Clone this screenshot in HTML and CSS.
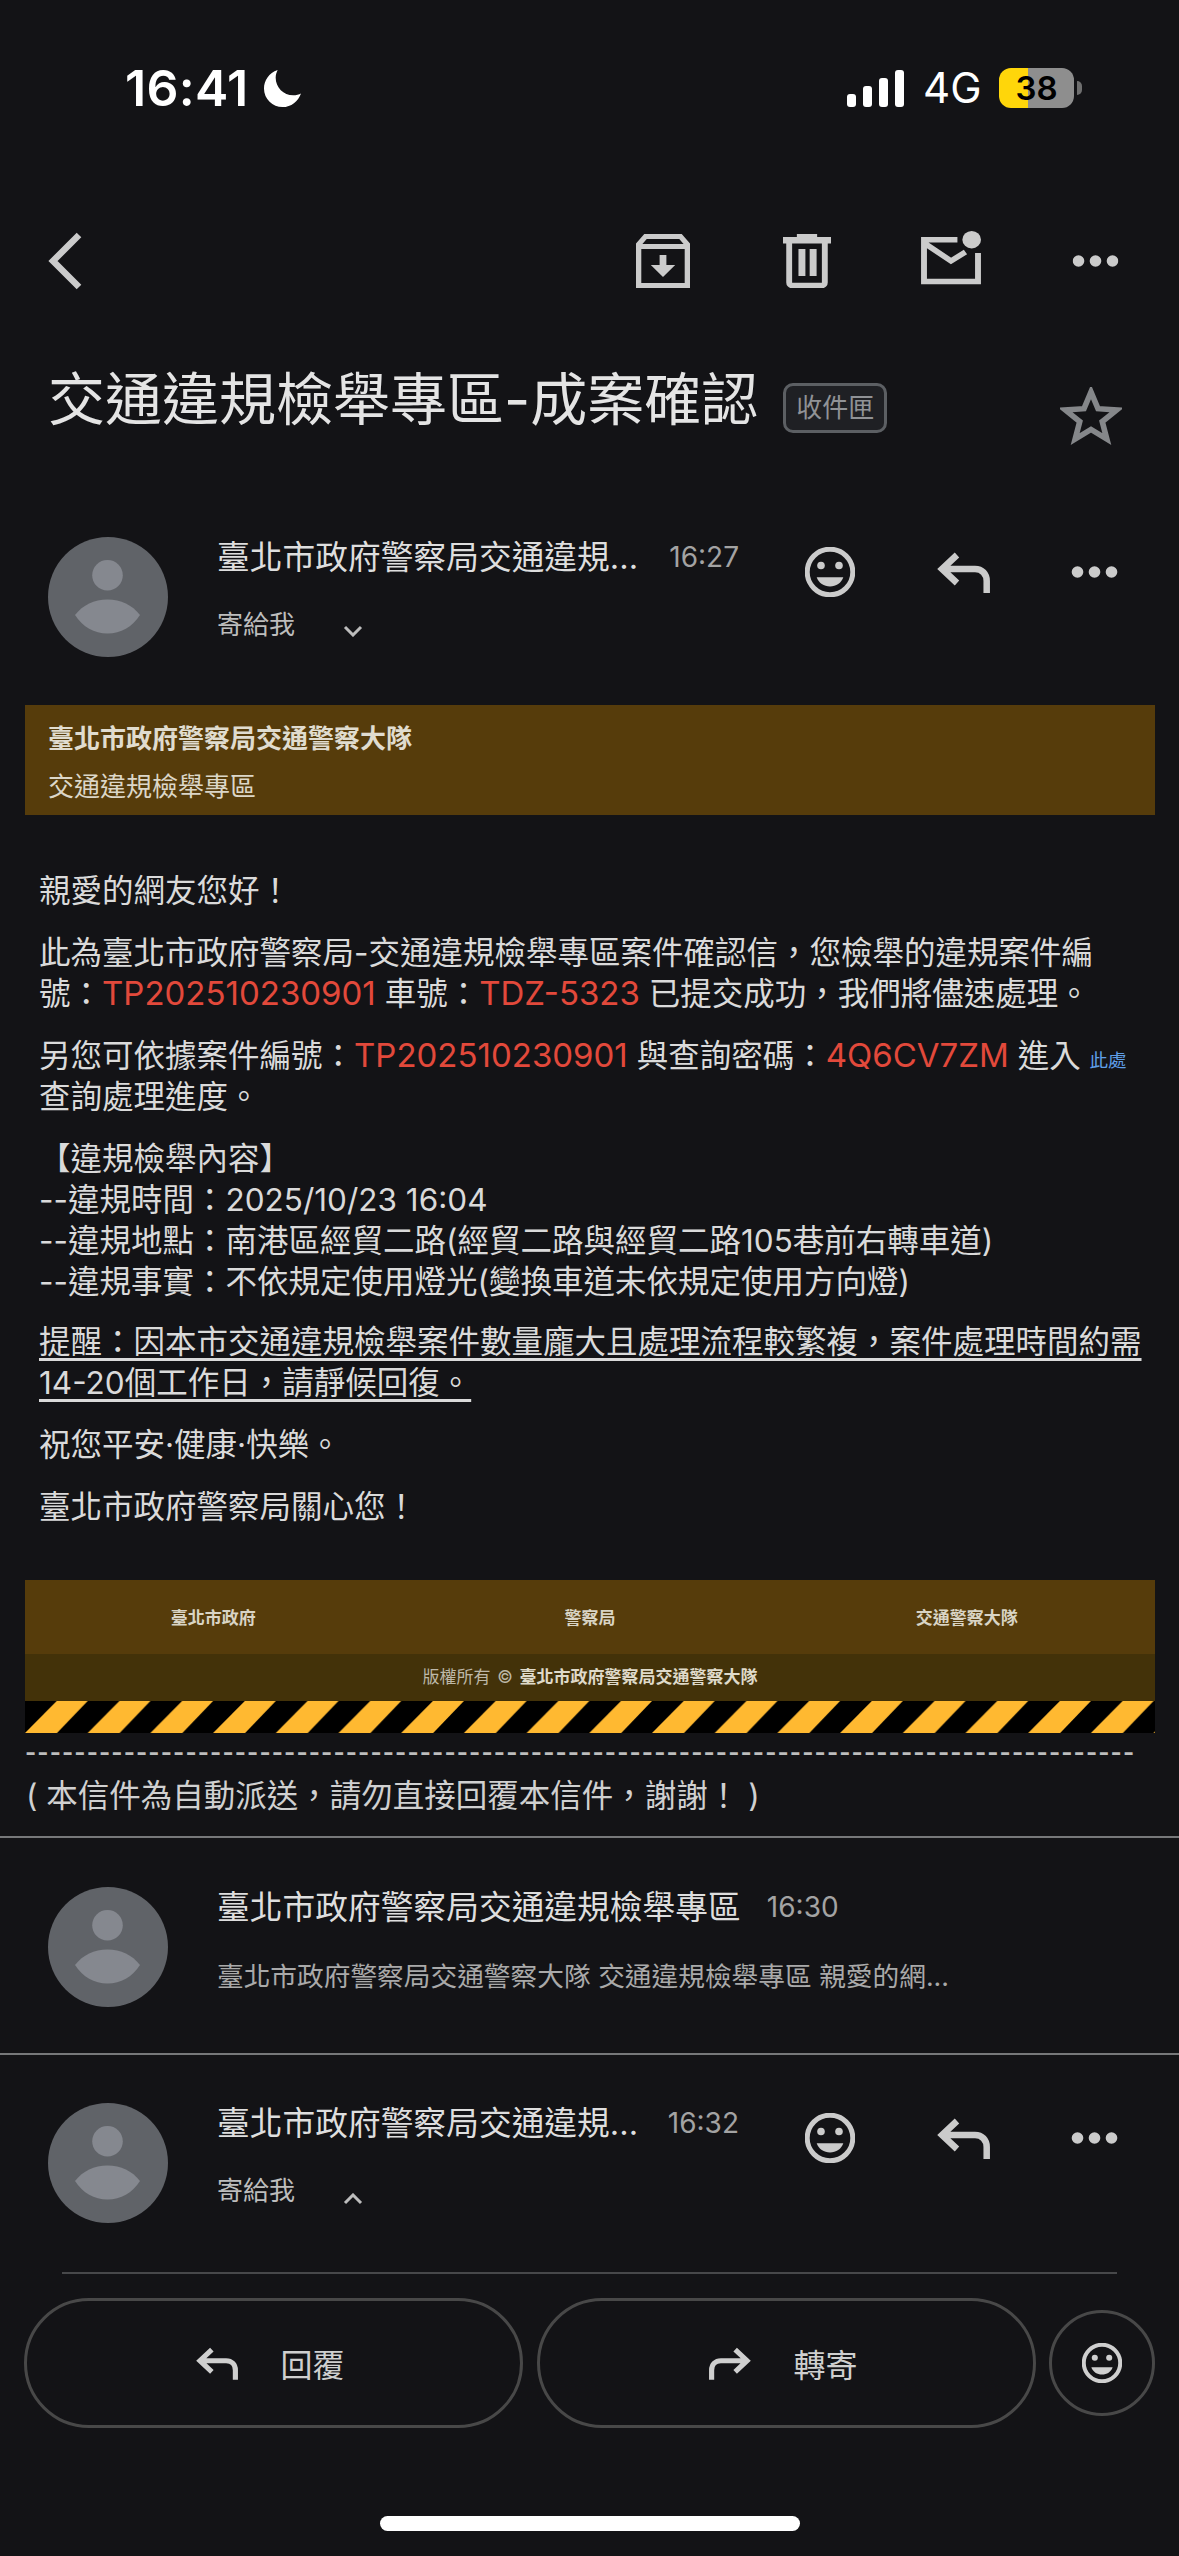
FILE: index.html
```html
<!DOCTYPE html>
<html lang="zh-Hant">
<head>
<meta charset="utf-8">
<title>交通違規檢舉專區-成案確認</title>
<link rel="stylesheet" href="styles.css">
</head>
<body>
<svg class="defs" xmlns="http://www.w3.org/2000/svg">
  <symbol id="i-avatar" viewBox="0 0 120 120">
    <circle cx="60" cy="60" r="60" fill="#606368"/>
    <circle cx="59.500" cy="38.300" r="15.300" fill="#85888f"/>
    <path d="M27 78c8-10 19-15.500 32.500-15.500S84 68 92 78c-8 12-19 18.500-32.500 18.500S35 90 27 78z" fill="#85888f"/>
  </symbol>
  <symbol id="i-smile" viewBox="0 0 50 50">
    <circle cx="25" cy="25" r="22.800" fill="none" stroke="currentColor" stroke-width="5"/>
    <circle cx="16" cy="18.500" r="3.800" fill="currentColor"/>
    <circle cx="34" cy="18.500" r="3.800" fill="currentColor"/>
    <path d="M11.700 30.300h26.600c-1.800 5.700-7.300 9.200-13.300 9.200s-11.500-3.500-13.300-9.200z" fill="currentColor"/>
  </symbol>
  <symbol id="i-reply" viewBox="0 0 53 41">
    <path d="M20 3 5 17l15 14M5 17h33c7 0 11.700 5 11.700 12v12" fill="none" stroke="currentColor" stroke-width="6.500"/>
  </symbol>
  <symbol id="i-forward" viewBox="0 0 53 41">
    <path d="M33 3l15 14-15 14M48 17H15C8 17 3.300 22 3.300 29v12" fill="none" stroke="currentColor" stroke-width="6.500"/>
  </symbol>
  <symbol id="i-dots" viewBox="0 0 46 12">
    <circle cx="6" cy="6" r="5.800" fill="currentColor"/>
    <circle cx="23" cy="6" r="5.800" fill="currentColor"/>
    <circle cx="40" cy="6" r="5.800" fill="currentColor"/>
  </symbol>
</svg>

<main class="screen">
  <header class="status">
    <div class="clock">
      <span class="time">16:41</span>
      <svg class="moon" viewBox="0 0 40 40"><path d="M15 1C6 4 1 12 1 20c0 11 9 19 19 19 9 0 16-6 19-14-2 1-5 2-8 2-10 0-18-8-18-18 0-3 1-6 2-8z" fill="#fff"/></svg>
    </div>
    <div class="sys">
      <div class="signal"><i class="bar b1"></i><i class="bar b2"></i><i class="bar b3"></i><i class="bar b4"></i></div>
      <span class="net">4G</span>
      <div class="battery"><span class="level">38</span></div>
      <i class="nub"></i>
    </div>
  </header>

  <nav class="toolbar">
    <svg class="back" viewBox="0 0 34 58"><path d="M31 3 5 29l26 26" fill="none" stroke="currentColor" stroke-width="6.500"/></svg>
    <div class="tools">
      <svg class="tool-archive" viewBox="0 0 51 54" preserveAspectRatio="none"><path d="M2.500 51.500V10.500L9 2.500h33l6.500 8v41zM3 12.500h45" fill="none" stroke="currentColor" stroke-width="5"/><path d="M22.300 21h6.400v10H37L25.500 43 14 31h8.300z" fill="currentColor"/></svg>
      <svg class="tool-trash" viewBox="0 0 45 54" preserveAspectRatio="none"><path d="M13 0h19v3h13v6.500H0V3h13z" fill="currentColor"/><path d="M5.800 9v39.500c0 1.500 1 3 2.700 3h28c1.700 0 2.700-1.500 2.700-3V9" fill="none" stroke="currentColor" stroke-width="5.500"/><path d="M14.500 15h6.500v27h-6.500zM25 15h6.500v27H25z" fill="currentColor"/></svg>
      <svg class="tool-mail" viewBox="0 0 56 54" preserveAspectRatio="none"><circle cx="47.300" cy="8.700" r="8.700" fill="currentColor"/><path d="M34 8.800H2.800v41.700h50.400V22M3 12l25 18 13.500-9" fill="none" stroke="currentColor" stroke-width="5.500"/></svg>
      <svg class="tool-dots" viewBox="0 0 46 12"><use href="#i-dots"/></svg>
    </div>
  </nav>

  <section class="subject">
    <h1 class="subject-title">交通違規檢舉專區-成案確認</h1>
    <span class="chip">收件匣</span>
    <svg class="star" viewBox="0 0 60 59" preserveAspectRatio="none"><path d="M30 5l6.800 16.700 18 1.300-13.900 11.600 4.400 17.400L30 42.500 14.700 52l4.400-17.400L5.200 23l18-1.300z" fill="none" stroke="#85878a" stroke-width="5.500"/></svg>
  </section>

  <section class="msg msg-first">
    <svg class="avatar"><use href="#i-avatar"/></svg>
    <div class="who">
      <div class="name-line"><span class="name">臺北市政府警察局交通違規...</span><span class="stamp">16:27</span></div>
      <div class="to-line"><span class="to">寄給我</span><svg class="caret" viewBox="0 0 20 12"><path d="M2 2l8 8 8-8" fill="none" stroke="currentColor" stroke-width="3"/></svg></div>
    </div>
    <div class="actions">
      <svg class="act-smile"><use href="#i-smile"/></svg>
      <svg class="act-reply"><use href="#i-reply"/></svg>
      <svg class="act-dots"><use href="#i-dots"/></svg>
    </div>
  </section>

  <article class="mail">
    <div class="banner">
      <div class="banner-title">臺北市政府警察局交通警察大隊</div>
      <div class="banner-sub">交通違規檢舉專區</div>
    </div>
    <div class="content">
      <p><span class="line">親愛的網友您好！</span></p>
      <p><span class="line">此為臺北市政府警察局-交通違規檢舉專區案件確認信，您檢舉的違規案件編</span><span class="line">號：<span class="red">TP202510230901</span> 車號：<span class="red">TDZ-5323</span> 已提交成功，我們將儘速處理。</span></p>
      <p><span class="line">另您可依據案件編號：<span class="red">TP202510230901</span> 與查詢密碼：<span class="red">4Q6CV7ZM</span> 進入 <a class="here">此處</a></span><span class="line">查詢處理進度。</span></p>
      <p><span class="line">【違規檢舉內容】</span><span class="line">--違規時間：2025/10/23 16:04</span><span class="line">--違規地點：南港區經貿二路(經貿二路與經貿二路105巷前右轉車道)</span><span class="line">--違規事實：不依規定使用燈光(變換車道未依規定使用方向燈)</span></p>
      <p class="notice"><span class="line">提醒：因本市交通違規檢舉案件數量龐大且處理流程較繁複，案件處理時間約需</span><span class="line">14-20個工作日，請靜候回復。</span></p>
      <p><span class="line">祝您平安‧健康‧快樂。</span></p>
      <p><span class="line">臺北市政府警察局關心您！</span></p>
    </div>
    <footer class="foot">
      <div class="foot-links"><span>臺北市政府</span><span>警察局</span><span>交通警察大隊</span></div>
      <div class="foot-copy">版權所有 © <b>臺北市政府警察局交通警察大隊</b></div>
      <svg class="stripes" xmlns="http://www.w3.org/2000/svg">
        <defs><pattern id="hazard" width="62.700" height="32" patternUnits="userSpaceOnUse"><path d="M0 32h32L62.700 0h-31z" fill="#ffb931"/></pattern></defs>
        <rect width="100%" height="100%" fill="#000"/>
        <rect width="100%" height="100%" fill="url(#hazard)"/>
      </svg>
    </footer>
    <div class="dashes">------------------------------------------------------------------------------------------</div>
    <div class="auto-note">( 本信件為自動派送，請勿直接回覆本信件，謝謝！ )</div>
  </article>

  <hr class="rule rule-a">

  <section class="msg msg-second">
    <svg class="avatar"><use href="#i-avatar"/></svg>
    <div class="who">
      <div class="name-line"><span class="name">臺北市政府警察局交通違規檢舉專區</span><span class="stamp stamp-wide">16:30</span></div>
      <div class="snippet">臺北市政府警察局交通警察大隊 交通違規檢舉專區 親愛的網...</div>
    </div>
  </section>

  <hr class="rule rule-b">

  <section class="msg msg-third">
    <svg class="avatar"><use href="#i-avatar"/></svg>
    <div class="who">
      <div class="name-line"><span class="name">臺北市政府警察局交通違規...</span><span class="stamp">16:32</span></div>
      <div class="to-line"><span class="to">寄給我</span><svg class="caret" viewBox="0 0 20 12"><path d="M2 10l8-8 8 8" fill="none" stroke="currentColor" stroke-width="3"/></svg></div>
    </div>
    <div class="actions">
      <svg class="act-smile"><use href="#i-smile"/></svg>
      <svg class="act-reply"><use href="#i-reply"/></svg>
      <svg class="act-dots"><use href="#i-dots"/></svg>
    </div>
  </section>

  <hr class="rule-short">

  <div class="buttons">
    <button class="pill"><svg class="pill-icon"><use href="#i-reply"/></svg><span>回覆</span></button>
    <button class="pill"><svg class="pill-icon"><use href="#i-forward"/></svg><span>轉寄</span></button>
    <button class="round"><svg class="round-icon"><use href="#i-smile"/></svg></button>
  </div>

  <div class="home"></div>
</main>
</body>
</html>
```

FILE: styles.css
```css
* { box-sizing: border-box; }
html, body { margin: 0; padding: 0; background: #131316; }
.defs { display: none; }

.screen {
  width: 1179px;
  height: 2556px;
  overflow: hidden;
  background: #131316;
  color: #dcdcdc;
  font-family: "Inter", "Noto Sans CJK TC", sans-serif;
  display: flex;
  flex-direction: column;
}

/* status bar */
.status {
  height: 176px;
  padding: 0 97px 0 125px;
  display: flex;
  justify-content: space-between;
  align-items: center;
  flex: none;
}
.clock { display: flex; align-items: center; gap: 15px; }
.time { font-size: 50px; font-weight: 600; color: #fff; line-height: 60px; letter-spacing: 0.300px; }
.moon { width: 39px; height: 39px; }
.sys { display: flex; align-items: center; }
.signal { display: flex; align-items: flex-end; gap: 6.500px; height: 37px; margin-right: 19px; }
.bar { width: 9.500px; background: #fff; border-radius: 3px; display: block; }
.b1 { height: 13px; }
.b2 { height: 21px; }
.b3 { height: 29px; }
.b4 { height: 37px; }
.net { font-size: 42px; font-weight: 400; color: #fff; width: 76px; line-height: 50px; }
.battery {
  width: 75px;
  height: 40px;
  border-radius: 12px;
  background: linear-gradient(90deg, #ffd60a 0 29px, #8e8e8e 29px 100%);
  display: flex;
  align-items: center;
  justify-content: center;
}
.level { color: #000; font-size: 33px; font-weight: 600; line-height: 40px; }
.nub { width: 5px; height: 14px; margin-left: 3px; border-radius: 0 7px 7px 0; background: #6f6f6f; display: block; }

/* toolbar */
.toolbar {
  height: 170px;
  flex: none;
  padding: 0 59px 0 48px;
  display: flex;
  justify-content: space-between;
  align-items: center;
  color: #cbcbcb;
}
.back { width: 34px; height: 58px; }
.tools { display: flex; align-items: center; }
.tool-archive { width: 54px; height: 54px; margin-right: 93px; }
.tool-trash { width: 48px; height: 54px; margin-right: 90px; }
.tool-mail { width: 60px; height: 54px; margin-top: -6px; margin-right: 90px; }
.tool-dots { width: 49px; height: 12px; }

/* subject */
.subject {
  height: 108px;
  flex: none;
  padding-left: 48px;
  display: flex;
  align-items: flex-start;
}
.subject-title {
  margin: 23px 0 0;
  font-size: 57px;
  font-weight: 400;
  line-height: 62px;
  color: #e4e4e4;
  white-space: nowrap;
}
.chip {
  margin: 37px 0 0 25px;
  width: 104px;
  height: 50px;
  border: 3px solid #5c5f63;
  border-radius: 10px;
  background: #1f2024;
  color: #909296;
  font-size: 26px;
  line-height: 43px;
  text-align: center;
}
.star { width: 62px; height: 59px; margin: 41px 0 0 173px; }

/* messages */
.msg { display: flex; padding-left: 48px; flex: none; }
.msg-first { margin-top: 83px; }
.msg-second { margin-top: 49px; }
.msg-third { margin-top: 48px; }
.avatar { width: 120px; height: 120px; flex: none; }
.who { margin-left: 49px; width: 522px; flex: none; }
.name-line { height: 40px; display: flex; align-items: center; white-space: nowrap; justify-content: space-between; }
.name { font-size: 32.700px; color: #dedede; line-height: 40px; letter-spacing: 0.050px; }
.stamp { font-size: 28px; color: #a3a3a3; line-height: 40px; }
.stamp-wide { margin-left: 26px; margin-right: -99px; }
.to-line { height: 40px; margin-top: 28px; display: flex; align-items: center; color: #bdbdbd; }
.to { font-size: 26px; line-height: 40px; }
.caret { width: 20px; height: 12px; margin: 12px 0 0 48px; }
.msg-third .caret { margin-top: 16px; }
.snippet { margin-top: 29px; font-size: 26.700px; line-height: 40px; color: #a9a9a9; white-space: nowrap; }
.actions { display: flex; align-items: center; margin: 10px 0 0 66px; height: 50px; color: #cbcbcb; }
.act-smile { width: 50px; height: 50px; margin-right: 82px; }
.act-reply { width: 53px; height: 41px; margin-right: 80px; }
.act-dots { width: 49px; height: 12px; }

/* mail body */
.mail { margin-top: 48px; flex: none; }
.banner { margin: 0 24px 0 25px; height: 110px; padding: 10px 0 0 23px; background: #563c0b; }
.banner-title { font-size: 26px; font-weight: 700; line-height: 48px; color: #e0dccf; }
.banner-sub { font-size: 26px; line-height: 48px; color: #dcd7c8; }
.content { padding: 55px 0 0 39px; font-size: 31.500px; white-space: nowrap; color: #dadada; height: 765px; }
.content p { margin: 0 0 21px; }
.content .notice { margin-top: -2px; text-decoration: underline; text-underline-offset: 5px; }
.line { display: block; height: 41px; line-height: 41px; }
.red { color: #e2493b; font-size: 33px; }
.here { color: #5f9ee8; font-size: 18.500px; }

.foot { margin: 0 24px 0 25px; }
.foot-links { height: 74px; background: #563c0b; display: grid; grid-template-columns: repeat(3, 1fr); align-items: center; justify-items: center; font-size: 17px; font-weight: 700; color: #d9d4c4; padding-bottom: 2px; }
.foot-copy { height: 47px; background: #433209; text-align: center; font-size: 17px; line-height: 47px; color: #bdb8a8; word-spacing: 2px; }
.foot-copy b { color: #dfdac9; }
.stripes { display: block; width: 100%; height: 32px; }
.dashes { margin: 2px 0 0 25px; font-size: 24px; font-weight: 700; line-height: 36px; letter-spacing: 1.110px; color: #bdbdbd; white-space: nowrap; }
.auto-note { margin: 4px 0 0 26px; font-size: 31.500px; line-height: 41px; color: #d0d0d0; white-space: nowrap; }

.rule { border: 0; margin: 0; height: 2px; background: #77787a; flex: none; }
.rule-a { margin-top: 20px; }
.rule-b { margin-top: 46px; }
.rule-short { border: 0; height: 2px; margin: 49px 62px 0; background: #47484a; flex: none; }

/* bottom buttons */
.buttons { margin-top: 24px; padding: 0 24px; display: flex; align-items: center; gap: 14px; flex: none; }
.pill {
  width: 499px;
  height: 130px;
  flex: none;
  border: 3px solid #484848;
  border-radius: 65px;
  background: transparent;
  color: #cfcfcf;
  font-family: inherit;
  font-size: 32px;
  display: flex;
  align-items: center;
  justify-content: center;
  gap: 42px;
  padding: 0 6px 0 0;
}
.pill-icon { width: 42px; height: 33px; }
.round {
  width: 106px;
  height: 106px;
  flex: none;
  margin-left: -1px;
  border: 3px solid #484848;
  border-radius: 50%;
  background: transparent;
  color: #cfcfcf;
  display: flex;
  align-items: center;
  justify-content: center;
  padding: 0;
}
.round-icon { width: 40px; height: 40px; }

.home { width: 420px; height: 15px; margin: 88px auto 0; background: #fff; border-radius: 8px; flex: none; }
```
